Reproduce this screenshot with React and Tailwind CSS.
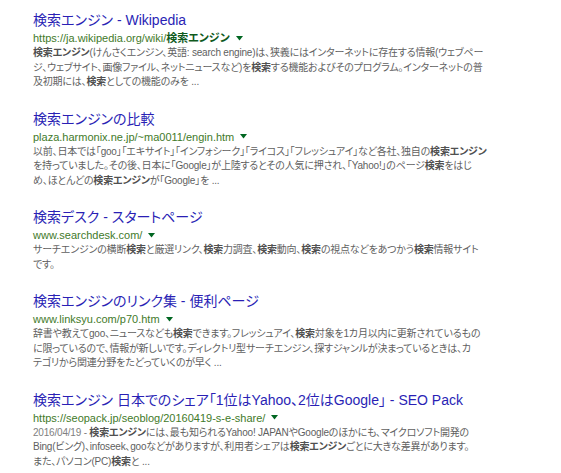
const results = [
  {
    title: "検索エンジン - Wikipedia",
    url: "https://ja.wikipedia.org/wiki/",
    urlBold: "検索エンジン",
    lines: [
      "検索エンジン(けんさくエンジン、英語: search engine)は、狭義にはインターネットに存在する情報(ウェブペー",
      "ジ、ウェブサイト、画像ファイル、ネットニュースなど)を検索する機能およびそのプログラム。インターネットの普",
      "及初期には、検索としての機能のみを ...",
    ],
  },
  {
    title: "検索エンジンの比較",
    url: "plaza.harmonix.ne.jp/~ma0011/engin.htm",
    lines: [
      "以前、日本では「goo」「エキサイト」「インフォシーク」「ライコス」「フレッシュアイ」など各社、独自の検索エンジン",
      "を持っていました。その後、日本に「Google」が上陸するとその人気に押され、「Yahoo!」のページ検索をはじ",
      "め、ほとんどの検索エンジンが「Google」を ...",
    ],
  },
  {
    title: "検索デスク - スタートページ",
    url: "www.searchdesk.com/",
    lines: [
      "サーチエンジンの横断検索と厳選リンク、検索力調査、検索動向、検索の視点などをあつかう検索情報サイト",
      "です。",
    ],
  },
  {
    title: "検索エンジンのリンク集 - 便利ページ",
    url: "www.linksyu.com/p70.htm",
    lines: [
      "辞書や教えてgoo、ニュースなども検索できます。フレッシュアイ、検索対象を1カ月以内に更新されているもの",
      "に限っているので、情報が新しいです。ディレクトリ型サーチエンジン、探すジャンルが決まっているときは、カ",
      "テゴリから関連分野をたどっていくのが早く ...",
    ],
  },
  {
    title: "検索エンジン 日本でのシェア「1位はYahoo、2位はGoogle」 - SEO Pack",
    url: "https://seopack.jp/seoblog/20160419-s-e-share/",
    date: "2016/04/19 - ",
    lines: [
      "検索エンジンには、最も知られるYahoo! JAPANやGoogleのほかにも、マイクロソフト開発の",
      "Bing(ビング)、infoseek、gooなどがありますが、利用者シェアは検索エンジンごとに大きな差異があります。",
      "また、パソコン(PC)検索と ...",
    ],
  },
];

function Highlight({ text }) {
  return text.split(/(検索エンジン|検索)/).map((part, i) =>
    part === "検索エンジン" || part === "検索" ? (
      <b key={i} className="font-bold text-[#505050]">
        {part}
      </b>
    ) : (
      <span key={i}>{part}</span>
    )
  );
}

function Result({ item }) {
  return (
    <div className="mb-[19px]">
      <div className="text-[14px] leading-[20px] whitespace-nowrap text-[#2a1fb5]">{item.title}</div>
      <div className="flex items-center text-[11px] leading-[16px] whitespace-nowrap text-[#3f7a2a]">
        <span>{item.url}</span>
        {item.urlBold && <b className="font-bold text-[#0f5a1c]">{item.urlBold}</b>}
        <svg className="ml-[6px]" width="7" height="5" viewBox="0 0 7 5">
          <path d="M0 0 L7 0 L3.5 4.5 Z" fill="#006621" />
        </svg>
      </div>
      <div className="text-[10px] leading-[14.5px] tracking-[-0.2px] text-[#5f5f5f]">
        {item.lines.map((line, i) => (
          <div key={i} className="whitespace-nowrap">
            {i === 0 && item.date && <span className="text-[#808080]">{item.date}</span>}
            <Highlight text={line} />
          </div>
        ))}
      </div>
    </div>
  );
}

export default function App() {
  return (
    <div
      className="h-[473px] w-[561px] overflow-hidden bg-white pl-[33px] pt-[10px] [font-feature-settings:'palt']"
      style={{ fontFamily: '"Liberation Sans", "Noto Sans CJK JP", sans-serif' }}
    >
      {results.map((item, i) => (
        <Result key={i} item={item} />
      ))}
    </div>
  );
}
